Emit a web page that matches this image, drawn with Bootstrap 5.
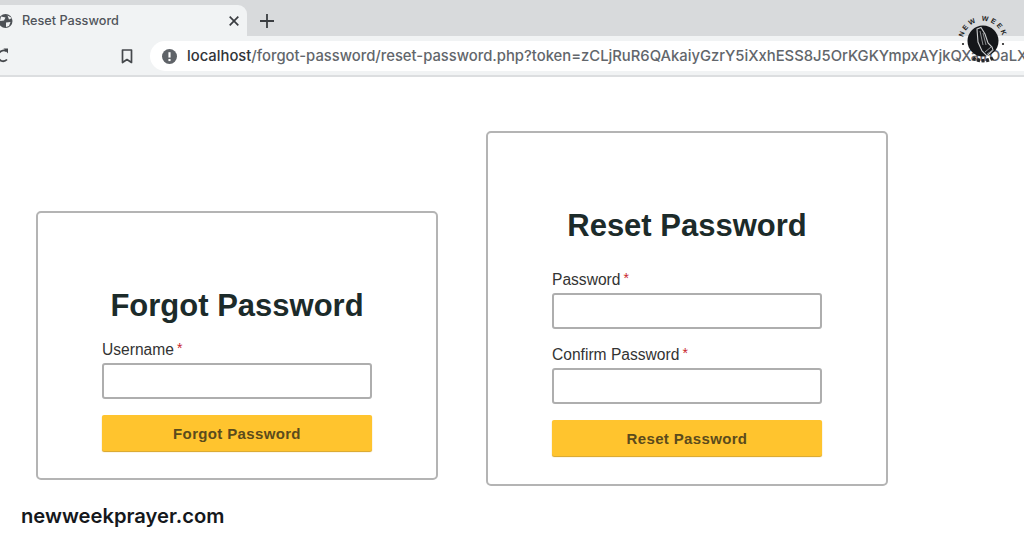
<!DOCTYPE html>
<html lang="en">
<head>
  <meta charset="UTF-8">
  <meta name="viewport" content="width=device-width, initial-scale=1.0">
  <title>Reset Password</title>
  <link href="https://cdn.jsdelivr.net/npm/bootstrap@5.3.0/dist/css/bootstrap.min.css" rel="stylesheet">
  <style>
    html, body { height: 538px; overflow: hidden; }
    body { background: #fff; font-family: "Liberation Sans", Arial, sans-serif; position: relative; }

    /* browser chrome */
    .tab-strip { height: 36px; background: #d8dadc; padding-top: 5px; }
    .page-tab { width: 247px; height: 31px; background: #f1f3f4; border-radius: 0 9px 0 0; color: #50545a; font: 500 12.7px Inter, sans-serif; padding-right: 8px; }
    .tab-globe { margin-left: -2px; }
    .page-tab .tab-title { margin-left: 9px; }
    .new-tab-plus { margin-left: 13px; }
    .tool-strip { height: 41px; background: #f1f3f4; border-bottom: 2px solid #dcdee0; padding-top: 5px; }
    .url-pill { margin-left: 17px; height: 30px; background: #fff; border-radius: 15px 0 0 15px; padding-left: 12px; white-space: nowrap; overflow: hidden; font: 500 14.8px Inter, sans-serif; color: #62666b; }
    .url-icon { margin-right: 10px; }
    .url-host { color: #303438; }
    .bookmark-slot { margin-left: 113px; }
    .new-week-logo { position: absolute; left: 956px; top: 14px; }

    /* forms */
    .form-stage { padding-left: 36px; gap: 48px; }
    .auth-box { width: 402px; border: 2px solid #b4b4b4; border-radius: 5px; padding: 74px 64px 0; }
    .auth-forgot { margin-top: 134px; height: 269px; }
    .auth-reset { margin-top: 54px; height: 355px; }
    .auth-box h2 { font: 700 31px/38px "Liberation Sans", Arial, sans-serif; color: #1c2b2a; text-align: center; margin: 0; }
    .auth-forgot h2 { margin-bottom: 15px; }
    .auth-reset h2 { margin-bottom: 25px; }
    .auth-box .form-label { font-size: 15.6px; line-height: 20px; color: #333; margin-bottom: 3px; display: block; }
    .req-star { color: #c8252c; font-size: 14px; line-height: 0; vertical-align: 2px; margin-left: 3px; }
    .auth-box .form-control { height: 36px; border: 2px solid #aeaeae; border-radius: 3px; margin-bottom: 16px; }
    .auth-box .btn-go { width: 100%; height: 36px; background: #ffc42e; border: 0; border-radius: 2px; box-shadow: 0 1px 1px #d8a21f; color: #5b4b1c; font: 700 15px "Liberation Sans", Arial, sans-serif; letter-spacing: .35px; padding: 0; }
    .site-name { position: absolute; left: 21px; top: 504px; font: 600 20.2px/24px Inter, sans-serif; color: #15181c; }
  </style>
</head>
<body>
  <div class="tab-strip d-flex">
    <div class="page-tab d-flex align-items-center">
      <svg width="15" height="16" viewBox="0 0 15 16" class="tab-globe flex-shrink-0">
        <circle cx="7.500" cy="8" r="7" fill="#4d5156"/>
        <path d="M3 3.500 7.500 4.500 6 7.500 2 8ZM8 9.500 12.500 9 11 13 8 14ZM9.500 2.500 14 5 11 6.500Z" fill="#f1f3f4"/>
      </svg>
      <span class="tab-title flex-grow-1">Reset Password</span>
      <svg width="10" height="10" viewBox="0 0 10 10"><path d="M.7 .7 9.300 9.300M9.300 .7 .7 9.300" stroke="#3a3d41" stroke-width="1.700"/></svg>
    </div>
    <svg width="14" height="14" viewBox="0 0 14 14" class="new-tab-plus flex-shrink-0 align-self-center"><path d="M7 0V14M0 7H14" stroke="#3a3d41" stroke-width="1.800"/></svg>
  </div>
  <div class="tool-strip d-flex align-items-start">
    <div class="d-flex align-items-center" style="height:30px">
      <svg width="8" height="16" viewBox="0 0 8 16"><path d="M6.500 3.200A5.500 5.500 0 0 0 1.500 3 5.500 5.500 0 0 0 1.500 13 5.500 5.500 0 0 0 7 11.500" fill="none" stroke="#45484c" stroke-width="1.800"/><path d="M3.500 .5 8 .5 8 5.500Z" fill="#45484c"/></svg>
      <svg width="12" height="15" viewBox="0 0 12 15" class="bookmark-slot"><path d="M1.500 1H10.500V13.500L6 10.500 1.500 13.500Z" fill="none" stroke="#45484c" stroke-width="1.700" stroke-linejoin="round"/></svg>
    </div>
    <div class="url-pill flex-grow-1 d-flex align-items-center">
      <svg width="15" height="15" viewBox="0 0 14 14" class="url-icon flex-shrink-0">
        <circle cx="7" cy="7" r="7" fill="#5f6368"/><rect x="6" y="3" width="2" height="5" fill="#fff"/><rect x="6" y="9.300" width="2" height="2" fill="#fff"/>
      </svg>
      <span><span class="url-host">localhost</span>/forgot-password/reset-password.php?token=zCLjRuR6QAkaiyGzrY5iXxhESS8J5OrKGKYmpxAYjkQXaIrOaLX</span>
    </div>
  </div>

  <main class="form-stage d-flex align-items-start">
    <form class="auth-box auth-forgot bg-white">
      <h2>Forgot Password</h2>
      <label class="form-label" for="userName">Username<span class="req-star">*</span></label>
      <input class="form-control" id="userName" type="text">
      <button class="btn btn-go" type="button">Forgot Password</button>
    </form>
    <form class="auth-box auth-reset bg-white">
      <h2>Reset Password</h2>
      <label class="form-label" for="newPass">Password<span class="req-star">*</span></label>
      <input class="form-control" id="newPass" type="password">
      <label class="form-label" for="confirmPass">Confirm Password<span class="req-star">*</span></label>
      <input class="form-control" id="confirmPass" type="password">
      <button class="btn btn-go" type="button">Reset Password</button>
    </form>
  </main>

  <div class="site-name">newweekprayer.com</div>

  <svg class="new-week-logo" width="54" height="54" viewBox="0 0 54 54">
    <defs>
      <path id="logoArcTop" d="M7 27A20 20 0 0 1 47 27"/>
    </defs>
    <text font-family="Liberation Sans, sans-serif" font-weight="700" font-size="7" letter-spacing="2" fill="#222" text-anchor="middle"><textPath href="#logoArcTop" startOffset="50%">NEW WEEK</textPath></text>
    <!-- bottom lettering of the badge is illegible in the picture, drawn as a dark worn band -->
    <path d="M17 44A20 20 0 0 0 37 44" fill="none" stroke="#26282b" stroke-width="3.500" stroke-dasharray="3 1.500"/>
    <circle cx="27" cy="27" r="15.500" fill="#14161a"/>
    <path d="M21 15 25 13.500 29 20 32 29 36 33 37 36 31 42 26 37 22 28Z" fill="none" stroke="#c9cbcd" stroke-width="1.100"/>
    <path d="M24 17 27 31M27 19 30 31M29 38 35 33M31 40 37 36" fill="none" stroke="#9a9c9f" stroke-width=".9"/>
    <circle cx="7" cy="30" r="1.100" fill="#222"/><circle cx="47" cy="30" r="1.100" fill="#222"/>
  </svg>

  <script src="https://cdn.jsdelivr.net/npm/bootstrap@5.3.0/dist/js/bootstrap.bundle.min.js"></script>
</body>
</html>
